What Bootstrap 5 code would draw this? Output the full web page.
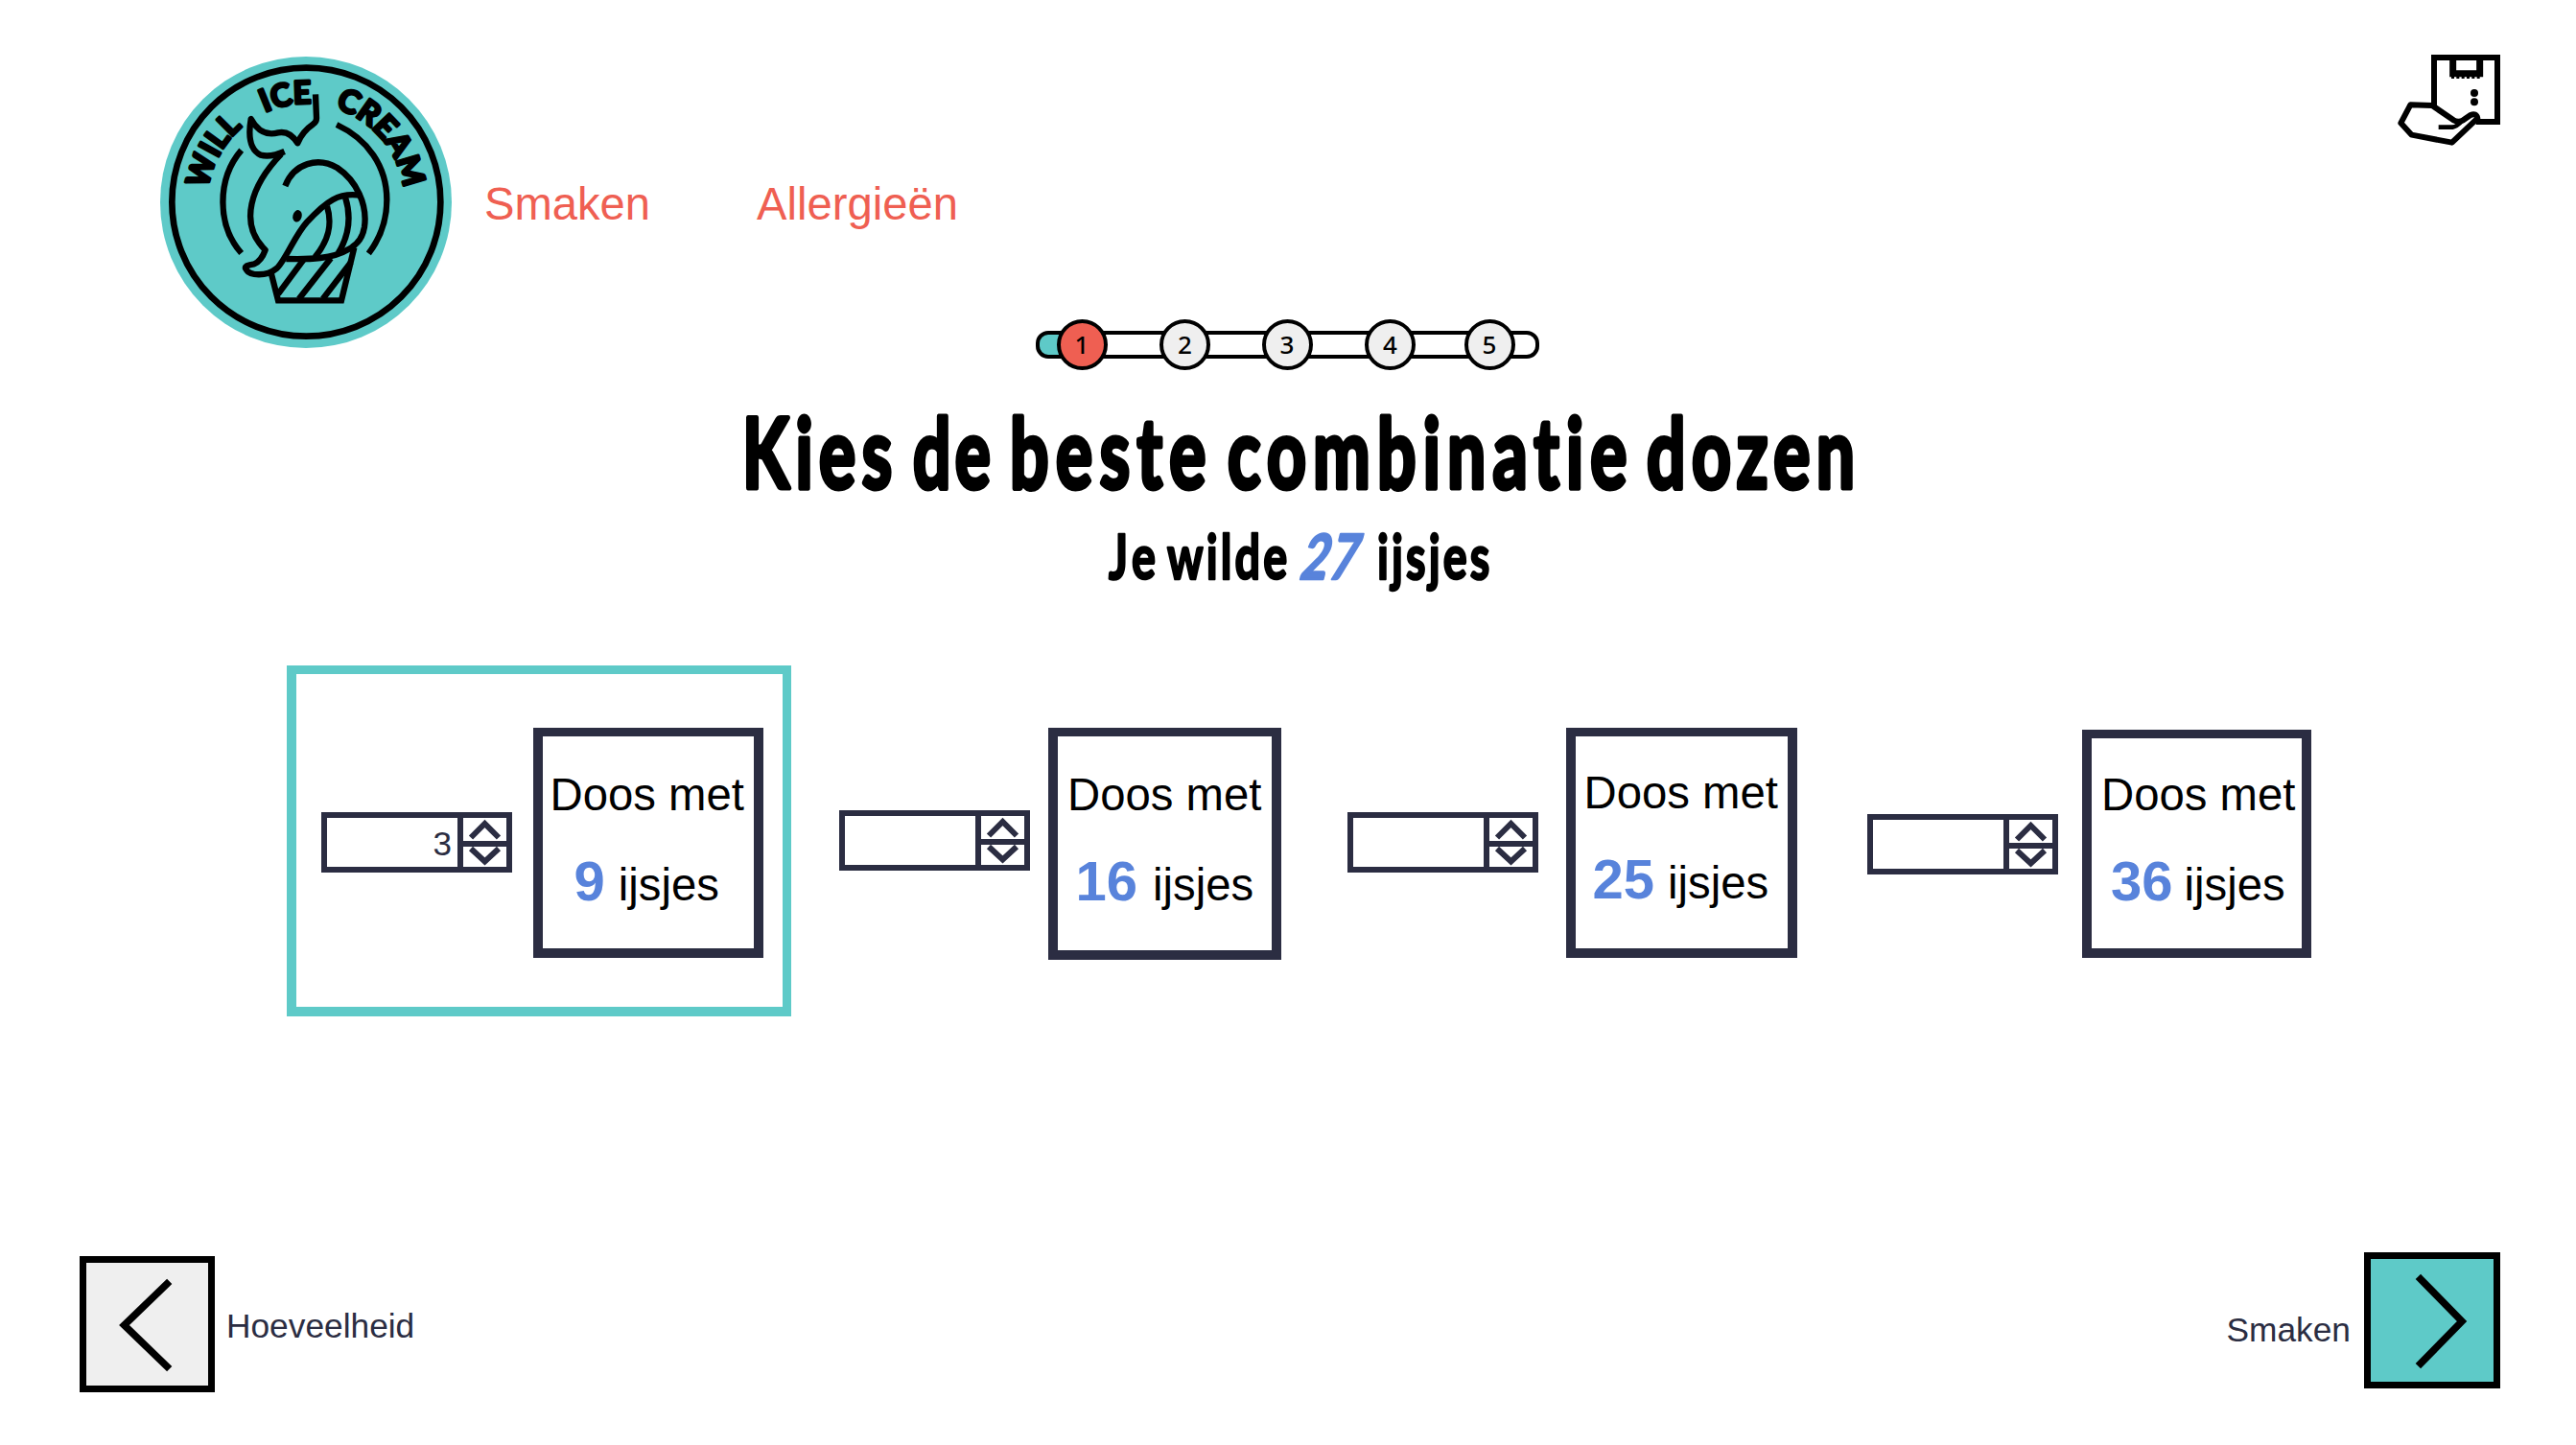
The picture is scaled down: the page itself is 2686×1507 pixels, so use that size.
<!DOCTYPE html>
<html lang="nl">
<head>
<meta charset="utf-8">
<title>Will Ice Cream</title>
<link href="https://cdn.jsdelivr.net/npm/bootstrap@5.3.0/dist/css/bootstrap.min.css" rel="stylesheet">
<style>
:root { --teal:#5ecac8; --coral:#ef5f52; --navy:#2b2d42; --blue:#5883db; }
body { font-family:"Liberation Sans",Arial,sans-serif; color:#000; background:#fff; overflow:hidden; }
svg { display:block; overflow:visible; }
.page { width:2686px; height:1507px; }
.topbar { height:333px; padding:0 56px 0 167px; }
.logo { width:304px; height:304px; margin-top:59px; }
.topnav { margin:189px 0 0 34px; gap:111px; font-size:47.2px; line-height:48px; }
.topnav a { color:var(--coral); }
.orders { width:150px; height:130px; margin:40px 0 0 auto; }
.stepper { width:525px; height:53px; margin-left:1079.5px; padding-left:22px; z-index:0; }
.stepper::before { content:""; position:absolute; z-index:-1; left:0; right:0; top:12px; height:29px; border:4.5px solid #000; border-radius:13px; background:linear-gradient(90deg,var(--teal) 30px,#fff 30px); }
.dot { width:53px; height:53px; border:4px solid #000; background:#efefef; padding-bottom:2px; font:500 26px/1 "Noto Sans","Open Sans",sans-serif; }
.dot.now { background:var(--coral); }
.gap-2nd, .gap-4th { margin-left:54.5px; }
.gap-3rd { margin-left:53.5px; }
.gap-5th { margin-left:50.5px; }
.hand { font-family:Lato,sans-serif; font-weight:700; fill:#000; stroke:#000; stroke-linejoin:round; font-variant-ligatures:none; }
.hand .count { fill:var(--blue); stroke:var(--blue); }
.options { margin-top:53px; height:366px; }
.picked { width:526px; height:366px; margin-left:299px; border:solid var(--teal); border-width:9px 9px 10px 10px; }
.spin { width:199px; height:63px; border:6px solid var(--navy); margin-top:var(--st); flex:none; }
.spin input { width:136px; height:51px; padding:3px 6px 0 0; font-size:35px; line-height:45px; color:var(--navy); background:#fff; }
.arrows { width:51px; border-left:6px solid var(--navy); }
.arrows svg { width:45px; height:24px; }
.arrows svg + svg { height:27px; border-top:6px solid var(--navy); }
.box { width:var(--w); height:var(--h); margin:var(--mt) 0 0 var(--ml); padding-top:var(--pt); border:solid var(--navy); border-width:9px 10px 10px; flex:none; font-size:47.3px; line-height:48px; white-space:nowrap; }
.box div:first-child { padding-left:var(--p1); }
.amount { margin-top:37px; padding-left:var(--p2); gap:var(--g); }
.amount b { font-size:58px; line-height:58px; color:var(--blue); }
.o1 { --st:144px; --w:240px; --h:240px; --mt:56px; --ml:22px; --pt:37px; --p1:7.5px; --p2:32.5px; --g:14px; padding-left:26px; }
.o2 { --st:151px; --w:243px; --h:242px; --mt:65px; --ml:19px; --pt:37px; --p1:10px; --p2:18.5px; --g:16px; margin-left:50px; }
.o3 { --st:153px; --w:241px; --h:240px; --mt:65px; --ml:29px; --pt:35px; --p1:8.5px; --p2:17.5px; --g:14px; margin-left:69px; }
.o4 { --st:155px; --w:239px; --h:238px; --mt:67px; --ml:25px; --pt:35px; --p1:10px; --p2:20px; --g:12px; margin-left:73px; }
.foot { margin-top:246px; padding:0 79px 0 83px; font-size:35.3px; line-height:36px; color:var(--navy); }
.step-btn { width:142px; height:142px; border:7px solid #000; background:var(--teal); }
.step-btn svg { width:128px; height:128px; }
.step-btn.prev { width:141px; background:#efefef; }
.back-label { margin-left:12px; padding-top:4px; }
.next-label { margin-right:14px; padding:23px 0 4px; }
.chev { fill:none; stroke:#000; stroke-width:7.5; stroke-linejoin:miter; stroke-linecap:square; }
.sm { fill:none; stroke:var(--navy); stroke-width:6; stroke-linecap:butt; }
</style>
<script src="https://cdn.jsdelivr.net/npm/bootstrap@5.3.0/dist/js/bootstrap.bundle.min.js"></script>
</head>
<body>
<div class="page">
  <header class="topbar d-flex align-items-start">
    <svg class="logo flex-shrink-0" viewBox="51 57 912 912">
      <defs><path id="arc" d="M199,512 A308,308 0 0 1 815,512"/></defs>
      <circle cx="507" cy="513" r="456" fill="#5ecac8"/>
      <circle cx="508" cy="512" r="420" fill="none" stroke="#000" stroke-width="20"/>
      <g class="hand" font-size="98" stroke-width="9">
        <text><textPath href="#arc" startOffset="40" textLength="228" lengthAdjust="spacingAndGlyphs">WILL</textPath></text>
        <text><textPath href="#arc" startOffset="351" textLength="150" lengthAdjust="spacingAndGlyphs">ICE</textPath></text>
        <text><textPath href="#arc" startOffset="576" textLength="348" lengthAdjust="spacingAndGlyphs">CREAM</textPath></text>
      </g>
      <g fill="none" stroke="#000" stroke-width="19" stroke-linejoin="round">
        <path d="M305,350 C228,440 228,585 305,672"/>
        <path d="M603,270 C700,315 760,400 760,505 C760,570 740,625 703,673"/>
        <path d="M537,175 L540,250 Q540,262 530,268 C505,285 492,300 481,328 C465,302 445,290 420,295 C385,305 355,290 335,252 C325,310 335,350 365,365 C390,372 415,365 440,354"/>
        <path d="M430,362 C335,460 295,580 380,662 C370,690 360,700 345,706 Q315,710 318,720 C330,745 385,745 415,720 C440,700 470,620 510,575 C570,510 610,480 680,492"/>
        <path d="M442,462 C470,390 545,370 605,405 C665,445 700,520 690,590 C685,620 670,645 640,660 C590,690 520,692 445,690"/>
        <path d="M573,525 C590,580 580,630 535,685 M630,497 C650,560 640,620 608,672"/>
        <path stroke-linejoin="miter" d="M397,730 L420,820 L618,820 L658,655"/>
        <path d="M500,692 L420,800 M585,688 L485,815 M648,700 L560,815"/>
      </g>
      <ellipse cx="480" cy="556" rx="14" ry="19" transform="rotate(15 480 556)"/>
    </svg>
    <nav class="topnav d-flex">
      <a class="text-decoration-none" href="#">Smaken</a>
      <a class="text-decoration-none" href="#">Allergieën</a>
    </nav>
    <svg class="orders flex-shrink-0" viewBox="0 0 450 390">
      <g fill="none" stroke="#000" stroke-width="18">
        <path d="M174,210 V60 H372 V261 H305"/>
        <path stroke-width="21" d="M233,60 V110 H317 V60"/>
        <path stroke-width="12" stroke-dasharray="9 7" d="M228,120 H322"/>
        <path stroke-linejoin="round" d="M100,208 L168,210 L235,256 Q250,264 265,256 L288,240 Q306,232 310,250 L230,326 L104,302 L70,265 Z"/>
        <path stroke-width="14" d="M188,278 H232 Q245,276 262,258"/>
      </g>
      <circle cx="300" cy="171" r="12"/><circle cx="300" cy="199" r="12"/>
    </svg>
  </header>

  <div class="stepper position-relative d-flex">
    <div class="dot now rounded-circle d-flex align-items-center justify-content-center">1</div>
    <div class="dot gap-2nd rounded-circle d-flex align-items-center justify-content-center">2</div>
    <div class="dot gap-3rd rounded-circle d-flex align-items-center justify-content-center">3</div>
    <div class="dot gap-4th rounded-circle d-flex align-items-center justify-content-center">4</div>
    <div class="dot gap-5th rounded-circle d-flex align-items-center justify-content-center">5</div>
  </div>

  <h1 class="m-0">
    <svg width="2686" height="155" viewBox="0 386 2686 155">
      <g class="hand" font-size="102" stroke-width="5">
        <text transform="translate(774 509) scale(.7 1)" textLength="223">Kies</text>
        <text transform="translate(952 509) scale(.68 1)" textLength="119">de</text>
        <text transform="translate(1053 509) scale(.7 1)" textLength="292">beste</text>
        <text transform="translate(1280 509) scale(.7 1)" textLength="595">combinatie</text>
        <text transform="translate(1717 509) scale(.7 1)" textLength="310">dozen</text>
      </g>
    </svg>
  </h1>
  <p class="m-0">
    <svg width="2686" height="100" viewBox="0 541 2686 100">
      <g class="hand" font-size="65" stroke-width="2.5">
        <text transform="translate(1156 604) scale(.72 1)" textLength="68">Je</text>
        <text transform="translate(1217 604) scale(.72 1)" textLength="174">wilde</text>
        <text class="count" transform="translate(1354 604) skewX(-14) scale(.74 1)" textLength="78">27</text>
        <text transform="translate(1436 604) scale(.72 1)" textLength="163">ijsjes</text>
      </g>
    </svg>
  </p>

  <main class="options d-flex align-items-start">
    <div class="picked o1 d-flex align-items-start">
      <div class="spin d-flex">
        <input class="form-control border-0 rounded-0 text-end" value="3" aria-label="Aantal">
        <div class="arrows"><svg viewBox="0 0 45 24"><path class="sm" d="M8,20.500 L22.500,6 L37,20.500"/></svg><svg viewBox="0 0 45 21"><path class="sm" d="M8,2 L22.500,15.500 L37,2"/></svg></div>
      </div>
      <div class="box"><div>Doos met</div><div class="amount d-flex align-items-baseline"><b>9</b><span>ijsjes</span></div></div>
    </div>
    <div class="o2 d-flex align-items-start">
      <div class="spin d-flex">
        <input class="form-control border-0 rounded-0 text-end" value="" aria-label="Aantal">
        <div class="arrows"><svg viewBox="0 0 45 24"><path class="sm" d="M8,20.500 L22.500,6 L37,20.500"/></svg><svg viewBox="0 0 45 21"><path class="sm" d="M8,2 L22.500,15.500 L37,2"/></svg></div>
      </div>
      <div class="box"><div>Doos met</div><div class="amount d-flex align-items-baseline"><b>16</b><span>ijsjes</span></div></div>
    </div>
    <div class="o3 d-flex align-items-start">
      <div class="spin d-flex">
        <input class="form-control border-0 rounded-0 text-end" value="" aria-label="Aantal">
        <div class="arrows"><svg viewBox="0 0 45 24"><path class="sm" d="M8,20.500 L22.500,6 L37,20.500"/></svg><svg viewBox="0 0 45 21"><path class="sm" d="M8,2 L22.500,15.500 L37,2"/></svg></div>
      </div>
      <div class="box"><div>Doos met</div><div class="amount d-flex align-items-baseline"><b>25</b><span>ijsjes</span></div></div>
    </div>
    <div class="o4 d-flex align-items-start">
      <div class="spin d-flex">
        <input class="form-control border-0 rounded-0 text-end" value="" aria-label="Aantal">
        <div class="arrows"><svg viewBox="0 0 45 24"><path class="sm" d="M8,20.500 L22.500,6 L37,20.500"/></svg><svg viewBox="0 0 45 21"><path class="sm" d="M8,2 L22.500,15.500 L37,2"/></svg></div>
      </div>
      <div class="box"><div>Doos met</div><div class="amount d-flex align-items-baseline"><b>36</b><span>ijsjes</span></div></div>
    </div>
  </main>

  <footer class="foot d-flex justify-content-between">
    <div class="d-flex align-items-center mt-1">
      <a class="step-btn prev" href="#" aria-label="Terug"><svg viewBox="0 0 128 128"><path class="chev" d="M84,22 L39.500,65 L84,108"/></svg></a>
      <span class="back-label">Hoeveelheid</span>
    </div>
    <div class="d-flex align-items-center align-self-start">
      <span class="next-label">Smaken</span>
      <a class="step-btn" href="#" aria-label="Verder"><svg viewBox="0 0 128 128"><path class="chev" d="M52,21 L95,65 L52,109"/></svg></a>
    </div>
  </footer>
</div>
</body>
</html>
